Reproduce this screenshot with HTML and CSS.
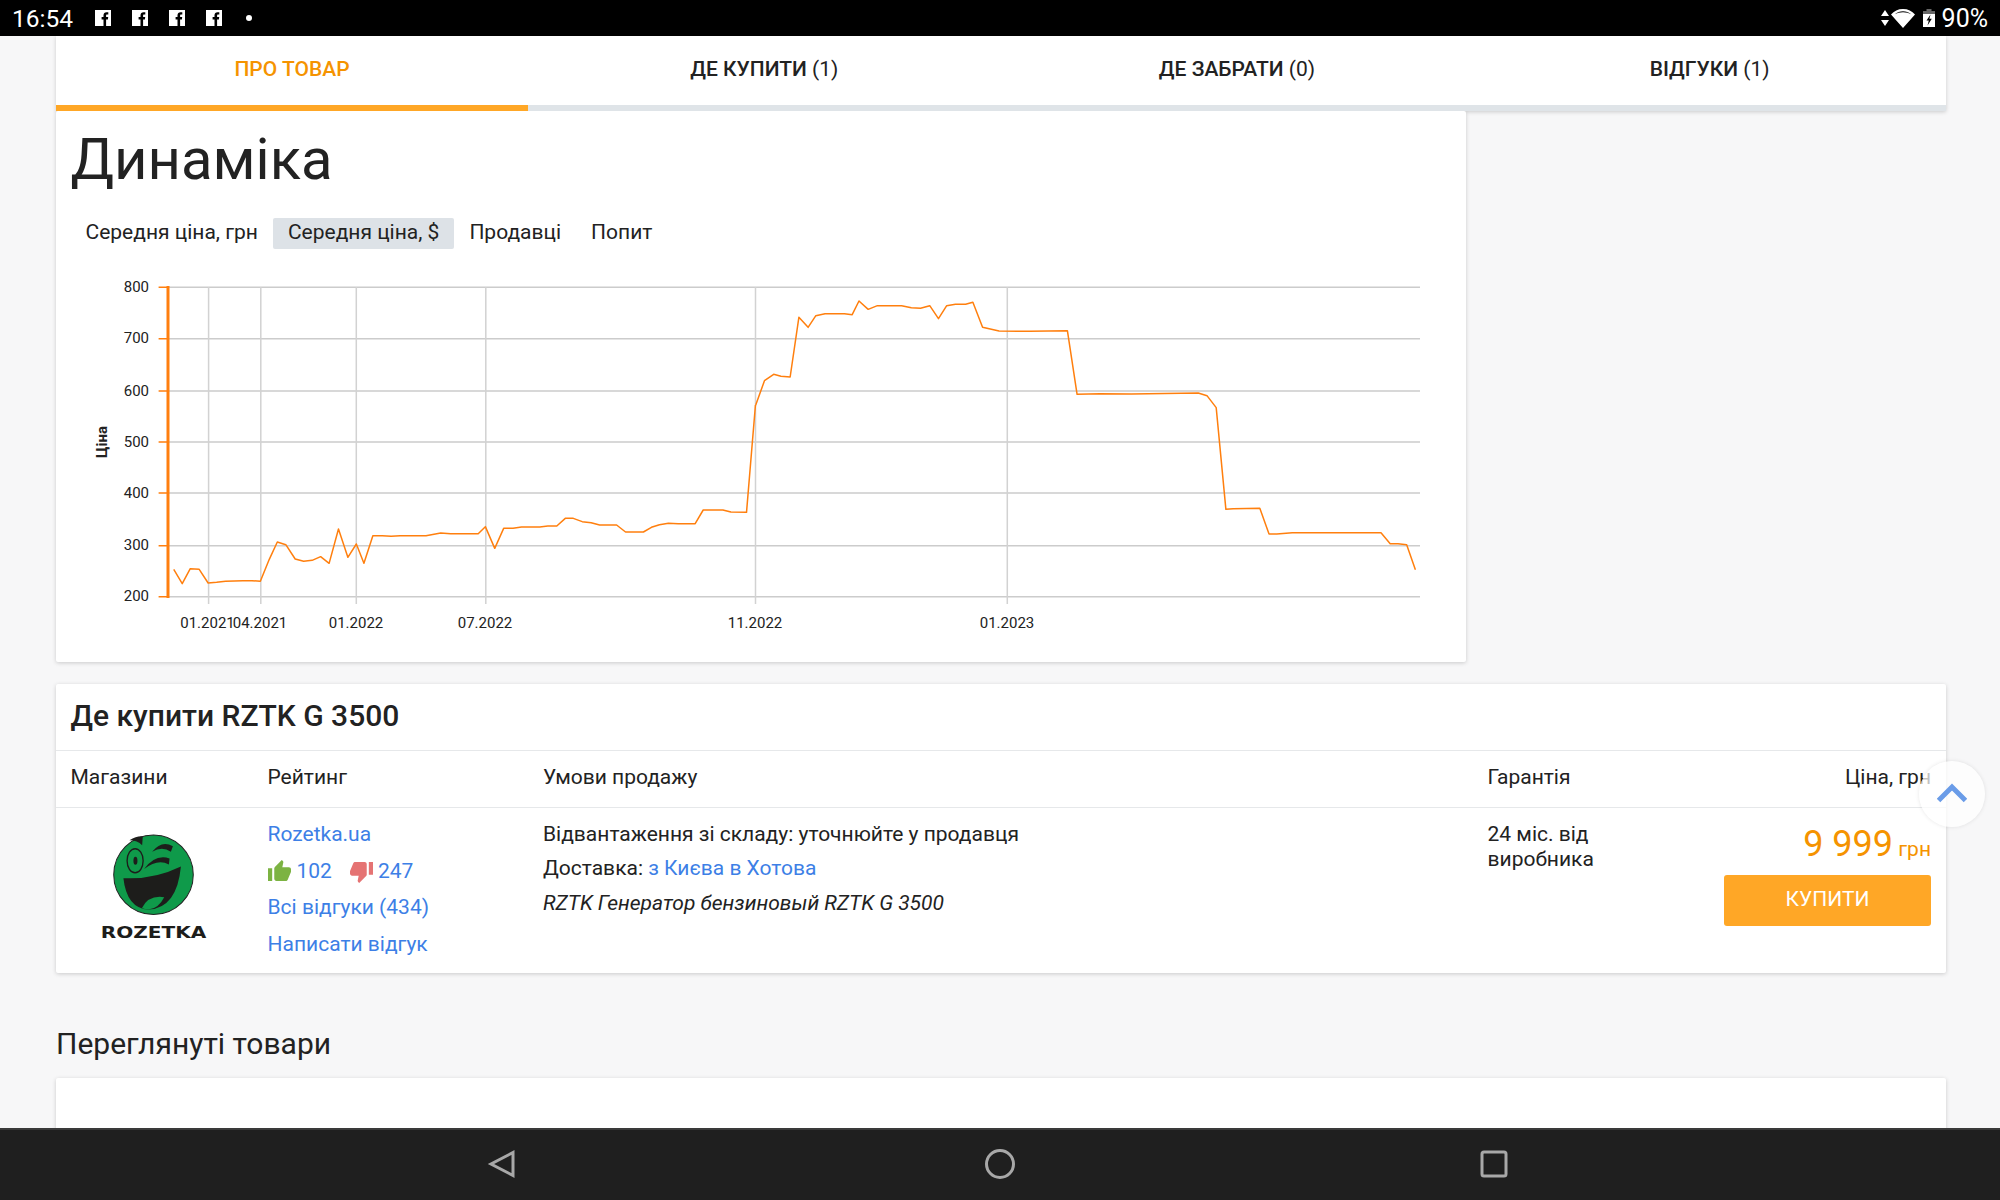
FILE: index.html
```html
<!DOCTYPE html>
<html lang="uk">
<head>
<meta charset="utf-8">
<title>Динаміка</title>
<link rel="stylesheet" href="styles.css">
</head>
<body>
<header class="status">
  <div class="status-left">
    <span class="time">16:54</span>
    <svg class="fb" viewBox="0 0 16 16"><path fill="#fff" d="M0 0h16v16H0z"/><path fill="#000" d="M8.500 16V9.500H6.600V7h1.900V5.300C8.500 3.300 9.700 2.200 11.500 2.200h1.800v2.400h-1.100c-.9 0-1.100.4-1.100 1.100V7h2.100l-.3 2.500h-1.800V16z"/></svg>
    <svg class="fb" viewBox="0 0 16 16"><path fill="#fff" d="M0 0h16v16H0z"/><path fill="#000" d="M8.500 16V9.500H6.600V7h1.900V5.300C8.500 3.300 9.700 2.200 11.500 2.200h1.800v2.400h-1.100c-.9 0-1.100.4-1.100 1.100V7h2.100l-.3 2.500h-1.800V16z"/></svg>
    <svg class="fb" viewBox="0 0 16 16"><path fill="#fff" d="M0 0h16v16H0z"/><path fill="#000" d="M8.500 16V9.500H6.600V7h1.900V5.300C8.500 3.300 9.700 2.200 11.500 2.200h1.800v2.400h-1.100c-.9 0-1.100.4-1.100 1.100V7h2.100l-.3 2.500h-1.800V16z"/></svg>
    <svg class="fb" viewBox="0 0 16 16"><path fill="#fff" d="M0 0h16v16H0z"/><path fill="#000" d="M8.500 16V9.500H6.600V7h1.900V5.300C8.500 3.300 9.700 2.200 11.500 2.200h1.800v2.400h-1.100c-.9 0-1.100.4-1.100 1.100V7h2.100l-.3 2.500h-1.800V16z"/></svg>
    <span class="dot"></span>
  </div>
  <div class="status-right">
    <svg class="arrows" viewBox="0 0 8 16"><path fill="#fff" d="M4 0l4 6H0zM4 16L0 10h8z"/></svg>
    <svg class="wifi" viewBox="0 0 24 20"><path fill="#fff" fill-rule="evenodd" d="M12 20L0 6.500C3 3 7 1 12 1s9 2 12 5.500zM3.800 6.300C6 4.300 9 3.200 12 3.200s6 1.100 8.200 3.100C18 5 15 4.300 12 4.300S6 5 3.800 6.300z"/></svg>
    <svg class="battery" viewBox="0 0 12 18"><path fill="#666" d="M3.500 0h5v2H12v4H0V2h3.500z"/><path fill="#fff" d="M0 5h12v13H0z"/><path fill="#000" d="M7.500 5.500L3.500 11.500h2.300L4.500 16.500 8.800 9.800H6.400z"/></svg>
    <span class="battery-level">90%</span>
  </div>
</header>

<main class="page">
  <nav class="tabs">
    <a class="tab tab-active">ПРО ТОВАР</a>
    <a class="tab"><b>ДЕ КУПИТИ</b> (1)</a>
    <a class="tab"><b>ДЕ ЗАБРАТИ</b> (0)</a>
    <a class="tab"><b>ВІДГУКИ</b> (1)</a>
  </nav>

  <section class="card chart-card">
    <h1 class="chart-title">Динаміка</h1>
    <div class="chart-tabs">
      <span class="chart-tab">Середня ціна, грн</span>
      <span class="chart-tab chart-tab-active">Середня ціна, $</span>
      <span class="chart-tab">Продавці</span>
      <span class="chart-tab">Попит</span>
    </div>
    <svg class="chart" viewBox="56 262 1410 378" role="img">
      <g class="grid">
        <path d="M168 287.300H1420M168 338.700H1420M168 391H1420M168 442H1420M168 493H1420M168 545.700H1420M168 596.700H1420"/>
        <path class="grid-v" d="M208.600 287V604M260.800 287V604M356.300 287V604M485.800 287V604M755.500 287V604M1007.300 287V604"/>
      </g>
      <path class="axis" d="M168 286V598"/>
      <path class="ticks" d="M158.600 287.300H168M158.600 338.700H168M158.600 391H168M158.600 442H168M158.600 493H168M158.600 545.700H168M158.600 596.700H168"/>
      <g class="y-labels">
        <text x="149" y="292">800</text>
        <text x="149" y="343">700</text>
        <text x="149" y="396">600</text>
        <text x="149" y="447">500</text>
        <text x="149" y="498">400</text>
        <text x="149" y="550">300</text>
        <text x="149" y="601">200</text>
      </g>
      <text class="y-title" transform="translate(107 442) rotate(-90)">Ціна</text>
      <g class="x-labels">
        <text x="207.500" y="628">01.2021</text>
        <text x="260" y="628">04.2021</text>
        <text x="356" y="628">01.2022</text>
        <text x="485" y="628">07.2022</text>
        <text x="755" y="628">11.2022</text>
        <text x="1007" y="628">01.2023</text>
      </g>
      <g transform="translate(80 270) scale(.44643 .33333)">
        <polyline class="line" points="210,898 229,941 247,896 267,898 287,939 306,937 326,934 365,932 385,932 404,934 424,868 442,816 461,824 482,867 501,874 520,871 539,860 558,880 579,777 600,862 619,822 636,880 656,797 677,797 697,799 717,797 775,797 808,789 830,791 892,791 908,770 929,835 949,775 970,775 989,771 1030,771 1048,768 1068,768 1087,745 1105,745 1125,755 1145,758 1164,765 1202,765 1222,786 1262,786 1280,772 1298,764 1318,760 1340,761 1378,761 1396,720 1440,720 1458,726 1493,727 1513,405"/>
      </g>
      <g transform="translate(700 270) scale(.48469 .33333)">
        <polyline class="line" points="115,405 133,332 152,313 167,319 186,321 204,142 223,172 239,137 258,131 298,131 314,134 328,93 347,118 366,107 416,107 436,113 455,115 474,107 492,146 509,107 527,103 548,103 563,97 583,172 617,183 680,184 758,182 778,373 825,371 890,372 1028,369 1046,377 1065,413 1085,718 1100,716 1155,715 1174,792 1190,792 1222,788 1405,788 1424,821 1440,821 1458,824 1476,899"/>
      </g>
    </svg>
  </section>

  <section class="card offers">
    <h2 class="offers-title">Де купити RZTK G 3500</h2>
    <div class="offers-grid offers-head">
      <span>Магазини</span>
      <span>Рейтинг</span>
      <span>Умови продажу</span>
      <span>Гарантія</span>
      <span class="price-head">Ціна, грн</span>
    </div>
    <div class="offers-grid offers-row">
      <div class="shop">
        <svg class="logo" viewBox="120 160 320 332" role="img">
          <circle cx="280" cy="285" r="119" fill="#0f9a4a" stroke="#222" stroke-width="3"/>
          <path fill="#1d1d1b" d="M190 295Q280 300 362 260Q350 385 265 389Q200 385 190 295Z"/>
          <path fill="#0f9a4a" d="M245 385Q265 345 312 352Q295 386 265 389Q253 388 245 385Z"/>
          <ellipse cx="225" cy="243" rx="24" ry="36" fill="none" stroke="#1d1d1b" stroke-width="4"/>
          <ellipse cx="226" cy="243" rx="6" ry="12" fill="#1d1d1b"/>
          <path fill="#1d1d1b" d="M252 268Q285 222 328 236L326 254Q292 236 252 268Z"/>
          <path fill="#1d1d1b" d="M276 216Q305 180 338 200L332 216Q306 198 276 216Z"/>
          <path fill="#1d1d1b" d="M208 182Q230 168 248 170L246 197Q232 182 208 182Z"/>
          <text class="logo-text" x="122" y="475" textLength="316" lengthAdjust="spacingAndGlyphs">ROZETKA</text>
        </svg>
      </div>
      <div class="rating">
        <a class="link">Rozetka.ua</a>
        <div class="votes">
          <svg class="thumb thumb-up" viewBox="1 1 22 22"><path d="M1 21h4V9H1v12zm22-11c0-1.100-.9-2-2-2h-6.310l.95-4.570.03-.32c0-.41-.17-.79-.44-1.060L14.170 1 7.590 7.590C7.220 7.950 7 8.450 7 9v10c0 1.100.9 2 2 2h9c.83 0 1.540-.5 1.840-1.220l3.020-7.050c.09-.23.14-.47.14-.73v-2z"/></svg>
          <a class="link vote-count">102</a>
          <svg class="thumb thumb-down" viewBox="1 1 22 22"><path d="M15 3H6c-.83 0-1.540.5-1.840 1.220l-3.020 7.050c-.09.23-.14.47-.14.73v2c0 1.100.9 2 2 2h6.310l-.95 4.570-.03.32c0 .41.17.79.44 1.060L9.830 23l6.590-6.590c.36-.36.58-.86.58-1.410V5c0-1.100-.9-2-2-2zm4 0v12h4V3h-4z"/></svg>
          <a class="link">247</a>
        </div>
        <a class="link">Всі відгуки (434)</a>
        <a class="link">Написати відгук</a>
      </div>
      <div class="terms">
        <p class="term-stock">Відвантаження зі складу: уточнюйте у продавця</p>
        <p class="term-delivery">Доставка: <a class="link">з Києва в Хотова</a></p>
        <p class="product-name">RZTK Генератор бензиновый RZTK G 3500</p>
      </div>
      <div class="warranty">24 міс. від<br>виробника</div>
      <div class="buy">
        <div class="price"><span class="price-value">9 999</span> <span class="price-cur">грн</span></div>
        <button class="buy-btn">КУПИТИ</button>
      </div>
    </div>
  </section>

  <h2 class="viewed-title">Переглянуті товари</h2>
  <section class="card viewed"></section>

  <button class="to-top" aria-label="Вгору">
    <svg viewBox="0 0 30 20"><path fill="none" stroke="#6a9ce8" stroke-width="5" d="M1.500 17.500L15 4l13.500 13.500"/></svg>
  </button>
</main>

<footer class="navbar">
  <svg class="nav-icon nav-back" viewBox="0 0 30 30"><path d="M26 3.500V26.500L4 15Z"/></svg>
  <svg class="nav-icon" viewBox="0 0 30 30"><circle cx="15" cy="15" r="13.500"/></svg>
  <svg class="nav-icon" viewBox="0 0 30 30"><rect x="3" y="3" width="24" height="24" rx="2"/></svg>
</footer>
</body>
</html>
```

FILE: styles.css
```css
* { box-sizing: border-box; }
html, body { margin: 0; height: 100%; }
body {
  display: flex;
  flex-direction: column;
  height: 1200px;
  overflow: hidden;
  background: #f7f7f8;
  color: #222;
  font-family: Roboto, "Noto Sans", sans-serif;
  font-size: 21px;
}
.status {
  flex: none;
  height: 36px;
  background: #000;
  color: #fff;
  display: flex;
  justify-content: space-between;
  align-items: center;
  padding: 0 12px 0 12px;
  font-size: 24.500px;
}
.status-left, .status-right { display: flex; align-items: center; }
.time { width: 83px; }
.fb { width: 16px; height: 16px; margin-right: 21px; }
.dot { width: 6px; height: 6px; border-radius: 50%; background: #fff; margin-left: 3px; }
.arrows { width: 8px; height: 16px; margin-right: 2px; }
.wifi { width: 24px; height: 20px; margin-right: 8px; }
.battery { width: 12px; height: 18px; margin-right: 7px; }
.battery-level { font-size: 25px; }

.page {
  flex: 1;
  min-height: 0;
  position: relative;
  overflow: hidden;
  padding: 0 54px 0 56px;
}
.card {
  background: #fff;
  box-shadow: 0 1px 4px rgba(0, 0, 0, .18);
  border-radius: 2px;
}
.tabs {
  display: grid;
  grid-template-columns: 472px repeat(3, 1fr);
  background: #fff;
  box-shadow: 0 1px 4px rgba(0, 0, 0, .18);
}
.tab {
  height: 75px;
  padding-top: 19px;
  text-align: center;
  border-bottom: 6px solid #dfe4e8;
  line-height: 28px;
}
.tab b { font-weight: 500; }
.tab-active {
  color: #f59300;
  font-weight: 500;
  border-bottom-color: #ffa726;
}
.chart-card {
  width: 1410px;
  height: 551px;
  padding: 0 0 22px;
}
.chart-title {
  margin: 0;
  padding: 13px 0 0 14.500px;
  font-size: 58px;
  font-weight: 400;
  line-height: 70px;
  height: 107px;
}
.chart-tabs { display: flex; padding-left: 14.500px; }
.chart-tab {
  height: 31px;
  line-height: 29px;
  padding: 0 15px;
  border-radius: 2px;
}
.chart-tab-active { background: #dde2e7; }
.chart {
  display: block;
  width: 1410px;
  height: 378px;
  margin-top: 13px;
  font-family: Roboto, sans-serif;
  font-size: 15px;
  fill: #222;
}
.grid path { stroke: #cccccc; stroke-width: 1.500; fill: none; }
.grid .grid-v { stroke: #d2d2d2; }
.axis { stroke: #ff7f0e; stroke-width: 3; fill: none; }
.ticks { stroke: #ff7f0e; stroke-width: 1.500; fill: none; }
.y-labels text { text-anchor: end; }
.x-labels text { text-anchor: middle; }
.y-title { font-weight: 700; text-anchor: middle; }
.line {
  fill: none;
  stroke: #ff7f0e;
  stroke-width: 1.500;
  vector-effect: non-scaling-stroke;
  stroke-linejoin: round;
}

.offers { margin-top: 22px; height: 289px; }
.offers-title {
  margin: 0;
  height: 67px;
  padding: 15px 14.500px 0;
  font-size: 30px;
  line-height: 34px;
  font-weight: 500;
  border-bottom: 1px solid #e6e8ea;
}
.offers-grid {
  display: grid;
  grid-template-columns: 197px 275.500px 944.500px 1fr 207px;
  padding: 0 15px 0 14.500px;
}
.offers-head {
  height: 57px;
  padding-bottom: 4px;
  align-items: center;
  border-bottom: 1px solid #e6e8ea;
}
.price-head { text-align: right; white-space: nowrap; }
.offers-row { height: 165px; }
.shop { padding: 25px 0 0 29px; }
.logo { display: block; width: 107px; height: 111px; }
.logo-text { font-family: "DejaVu Sans", sans-serif; font-weight: 700; font-size: 48px; fill: #1d1d1b; }
.link { color: #3d7fe6; }
.rating {
  display: flex;
  flex-direction: column;
  align-items: flex-start;
  padding-top: 14px;
  line-height: 25px;
  row-gap: 11.700px;
}
.votes { display: flex; align-items: center; }
.thumb { width: 23px; height: 23px; }
.thumb-up { fill: #7cb342; margin-right: 6px; }
.thumb-down { fill: #e57373; margin-right: 5px; }
.vote-count { margin-right: 18px; }
.terms { padding-top: 14px; line-height: 25px; }
.terms p { margin: 0; }
.term-stock { padding-bottom: 8.500px; }
.term-delivery { padding-bottom: 10.500px; }
.product-name { font-style: italic; }
.warranty { padding-top: 14px; line-height: 25px; }
.buy {
  display: flex;
  flex-direction: column;
  align-items: flex-end;
  padding-top: 14px;
}
.price { color: #f59300; white-space: nowrap; line-height: 44px; }
.price-value { font-size: 36px; }
.price-cur { font-size: 21px; }
.buy-btn {
  width: 207px;
  height: 51px;
  margin-top: 4px;
  padding: 0 0 3px;
  border: 0;
  border-radius: 3px;
  background: #ffa726;
  color: #fff;
  font: 400 21px Roboto, sans-serif;
}
.viewed-title {
  margin: 0;
  height: 105px;
  padding-top: 54px;
  font-size: 30px;
  line-height: 34px;
  font-weight: 400;
}
.viewed { height: 100px; }
.to-top {
  position: absolute;
  left: 1919px;
  top: 725px;
  width: 66px;
  height: 66px;
  padding: 0;
  border: 0;
  border-radius: 50%;
  background: rgba(255, 255, 255, .72);
  box-shadow: 0 0 4px rgba(0, 0, 0, .1);
  display: flex;
  align-items: center;
  justify-content: center;
}
.to-top svg { width: 30px; height: 20px; margin-bottom: 2px; }
.navbar {
  flex: none;
  height: 72px;
  padding-bottom: 2px;
  background: #1f1f1f;
  border-top: 2px solid #3a3a3a;
  display: grid;
  grid-template-columns: repeat(3, 494px);
  justify-content: center;
  justify-items: center;
  align-items: center;
}
.nav-icon {
  width: 30px;
  height: 30px;
  fill: none;
  stroke: #a8a8a8;
  stroke-width: 3;
}
.nav-back { margin-right: 9px; }
```
